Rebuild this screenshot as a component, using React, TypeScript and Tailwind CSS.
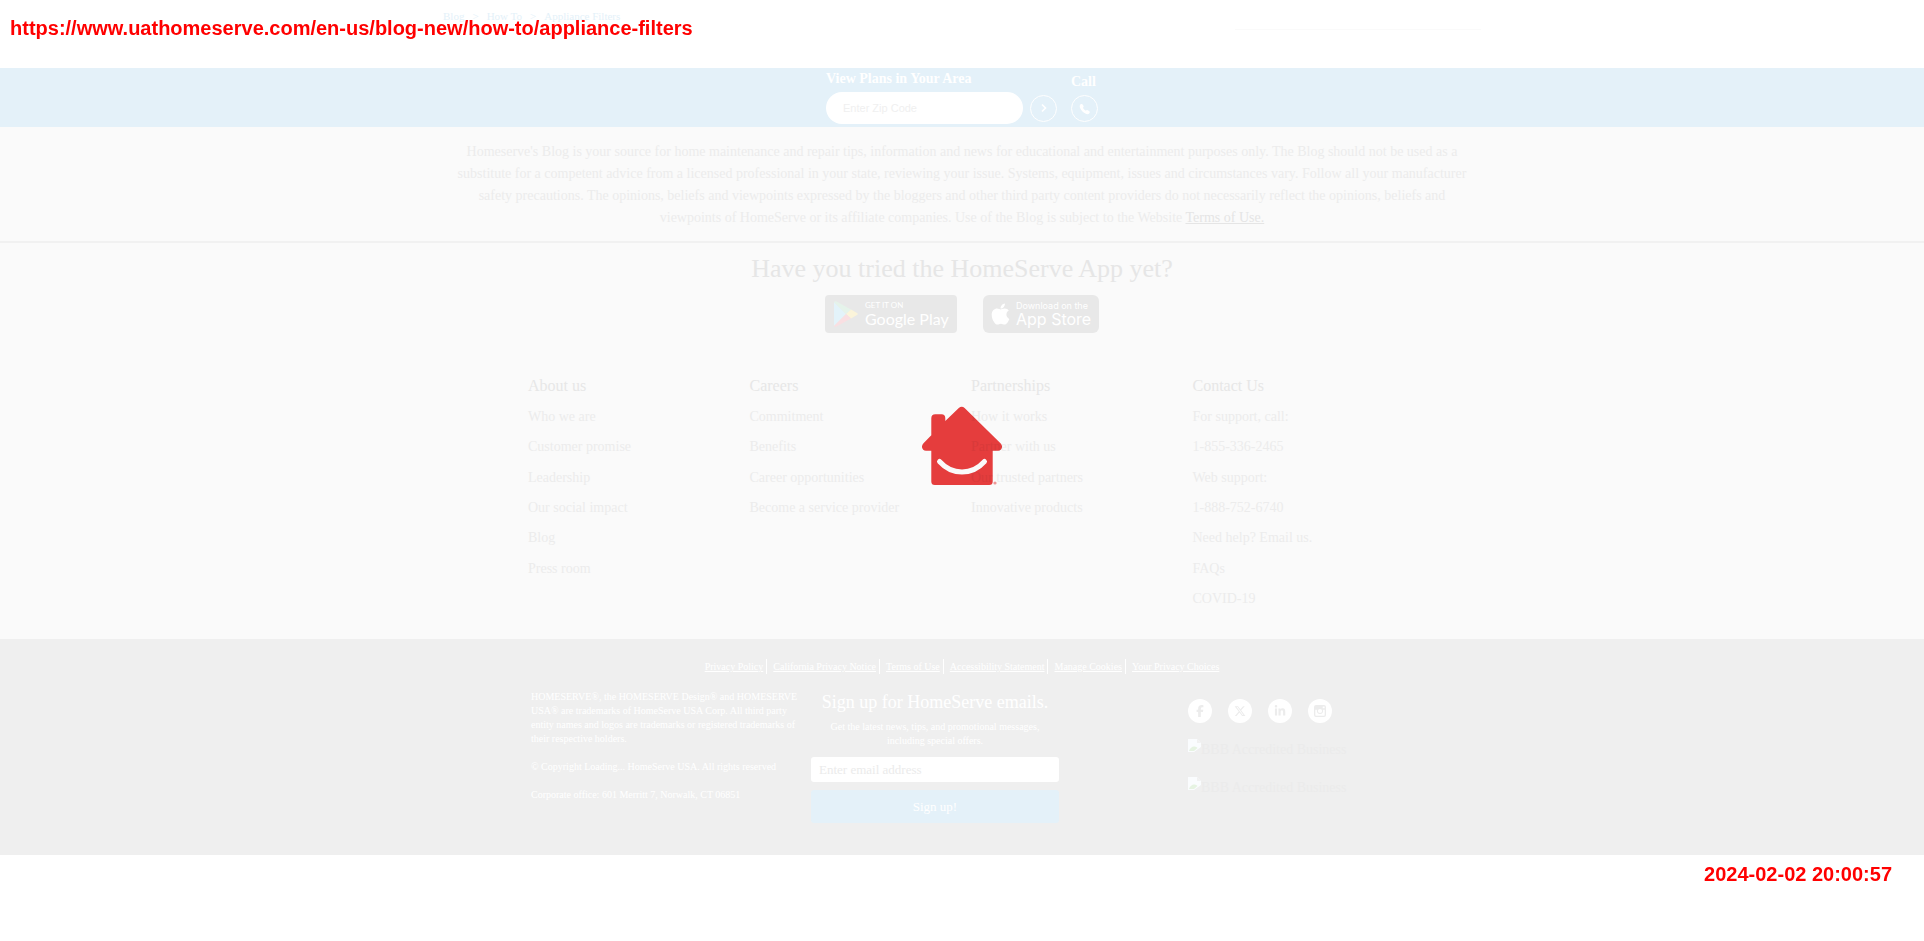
import React from "react";
import { FaApple, FaFacebookF, FaLinkedinIn, FaXTwitter } from "react-icons/fa6";

const columns = [
  {
    title: "About us",
    items: ["Who we are", "Customer promise", "Leadership", "Our social impact", "Blog", "Press room"],
  },
  {
    title: "Careers",
    items: ["Commitment", "Benefits", "Career opportunities", "Become a service provider"],
  },
  {
    title: "Partnerships",
    items: ["How it works", "Partner with us", "Our trusted partners", "Innovative products"],
  },
  {
    title: "Contact Us",
    items: [
      "For support, call:",
      "1-855-336-2465",
      "Web support:",
      "1-888-752-6740",
      "Need help? Email us.",
      "FAQs",
      "COVID-19",
    ],
  },
];

const legalLinks = [
  "Privacy Policy",
  "California Privacy Notice",
  "Terms of Use",
  "Accessibility Statement",
  "Manage Cookies",
  "Your Privacy Choices",
];

function CameraIcon({ className }: { className?: string }) {
  return (
    <svg viewBox="0 0 12 12" className={className} fill="currentColor">
      <path
        fillRule="evenodd"
        d="M2 0h8a2 2 0 0 1 2 2v8a2 2 0 0 1-2 2H2a2 2 0 0 1-2-2V2a2 2 0 0 1 2-2ZM1.300 4.700V10q0 .7.7.7h8q.7 0 .7-.7V4.700H9A3.200 3.200 0 1 1 3 4.700ZM8.700 1.400v1.800h1.900V1.400ZM6 3.900a2.100 2.100 0 1 0 0 4.200 2.100 2.100 0 0 0 0-4.200Z"
      />
    </svg>
  );
}

const socials = [
  { name: "Facebook", Icon: FaFacebookF },
  { name: "X", Icon: FaXTwitter },
  { name: "LinkedIn", Icon: FaLinkedinIn },
  { name: "Instagram", Icon: CameraIcon },
];

function Header() {
  return (
    <header className="h-[68px] bg-white">
      <div className="mx-auto flex max-w-[1038px] justify-between">
        <nav
          aria-label="Breadcrumb"
          className="flex gap-2 pt-[6px] text-[11px] leading-[20px] text-[#e4f1f9]"
        >
          <a href="#blog">Blog</a>
          <span>&gt;</span>
          <a href="#how-to">How To</a>
          <span>&gt;</span>
          <a href="#filters">Appliance Filters</a>
        </nav>
        <hr className="mt-[29px] w-[246px] border-[#fafafa]" />
      </div>
    </header>
  );
}

function PlansBar() {
  return (
    <section className="flex h-[59px] justify-center gap-[14px] bg-[#e4f1f9] text-white">
      <form onSubmit={(e) => e.preventDefault()}>
        <label htmlFor="zip" className="block pt-px text-[14px] font-bold leading-[20px]">
          View Plans in Your Area
        </label>
        <div className="mt-[3px] flex items-center gap-[7px]">
          <input
            id="zip"
            placeholder="Enter Zip Code"
            className="h-8 w-[197px] rounded-full bg-white px-[17px] font-['Liberation_Sans',sans-serif] text-[11px] outline-none placeholder:text-[#f0f0f0]"
          />
          <button
            type="submit"
            aria-label="Search plans"
            className="flex size-[27px] items-center justify-center rounded-full border border-white"
          >
            <svg viewBox="0 0 8 10" className="h-[10px] w-2" fill="none" stroke="currentColor" strokeWidth="1.6">
              <path d="M2 1.5 5.5 5 2 8.5" />
            </svg>
          </button>
        </div>
      </form>
      <div className="flex flex-col gap-[3px] pt-1">
        <span className="text-[14px] font-bold leading-[20px]">Call</span>
        <a
          href="#call"
          aria-label="Call"
          className="flex size-[27px] items-center justify-center rounded-full border border-white"
        >
          <svg viewBox="0 0 12 12" className="size-3" fill="currentColor">
            <path d="M1.6 1.2C2.4.6 3.5.9 4 1.9l.5 1.2c.3.7 0 1.2-.5 1.7.6 1.3 1.5 2.2 2.8 2.9.6-.6 1.2-.8 1.9-.4l1.4.8c.8.5.9 1.4.3 2.1-.9 1-2.1 1.2-3.5.6C4.3 9.7 2.2 7.6 1.1 5 .5 3.500.5 2.100 1.600 1.200Z" />
          </svg>
        </a>
      </div>
    </section>
  );
}

function Disclaimer() {
  return (
    <section className="border-b-2 border-[#f1f1f1] pb-3 pt-[14px]">
      <p className="mx-auto max-w-[1020px] text-center text-[14px] leading-[22px] text-[#ececec]">
        Homeserve's Blog is your source for home maintenance and repair tips, information and news for educational and
        entertainment purposes only. The Blog should not be used as a substitute for a competent advice from a licensed
        professional in your state, reviewing your issue. Systems, equipment, issues and circumstances vary. Follow all
        your manufacturer safety precautions. The opinions, beliefs and viewpoints expressed by the bloggers and other
        third party content providers do not necessarily reflect the opinions, beliefs and viewpoints of HomeServe or
        its affiliate companies. Use of the Blog is subject to the Website{" "}
        <a href="#terms" className="text-[#e5e5e5] underline">
          Terms of Use.
        </a>
      </p>
    </section>
  );
}

function AppPromo() {
  return (
    <section className="flex flex-col items-center pt-2">
      <h2 className="text-[26px] leading-[36px] text-[#e6e6e6]">Have you tried the HomeServe App yet?</h2>
      <div className="mt-2 flex gap-[26px] text-white">
        <a href="#google-play" className="flex h-[38px] w-[132px] items-center rounded bg-[#e8e8e8] pl-[9px]">
          <svg viewBox="0 0 24 26" className="h-[26px] w-6">
            <path d="M0 1v24l12-12Z" fill="#e3f3fa" />
            <path d="M0 1 12 13l5-4.500L2 .3Q.7-.2 0 1Z" fill="#e5f3ea" />
            <path d="M17 8.500 12 13l5 4.500 6-3.500q1.500-1 0-2Z" fill="#fbf4da" />
            <path d="M0 25 12 13l5 4.500L2 25.700Q.7 26.200 0 25Z" fill="#f9dfe2" />
          </svg>
          <span className="flex flex-col pl-[7px] font-['Lato',sans-serif]">
            <span className="text-[8px] leading-[10px]">GET IT ON</span>
            <span className="text-[16px] leading-[18px]">Google Play</span>
          </span>
        </a>
        <a href="#app-store" className="flex h-[38px] w-[116px] items-center rounded-md bg-[#e8e8e8] pl-[8px]">
          <FaApple className="h-[24px] w-[19px]" />
          <span className="flex flex-col pl-[6px] font-['Inter',sans-serif]">
            <span className="whitespace-nowrap text-[9px] leading-[10px]">Download on the</span>
            <span className="text-[16px] leading-[17px]">App Store</span>
          </span>
        </a>
      </div>
    </section>
  );
}

function SiteLinks() {
  return (
    <nav aria-label="Site" className="mx-auto mt-[41px] grid max-w-[886px] grid-cols-4 pb-[25px]">
      {columns.map((col) => (
        <div key={col.title} className="pl-[9px]">
          <h3 className="text-[16px] leading-[24px] text-[#e7e7e7]">{col.title}</h3>
          <ul className="mt-[3px] grid h-[213px] grid-rows-7 items-center text-[14px] leading-[21px] text-[#ececec]">
            {col.items.map((item) => (
              <li key={item}>
                <a href="#site">{item}</a>
              </li>
            ))}
          </ul>
        </div>
      ))}
    </nav>
  );
}

function BrokenImage({ label }: { label: string }) {
  return (
    <div className="flex h-[22px] items-start text-[14px] leading-[22px] text-[#ebebeb]">
      <svg viewBox="0 0 13 13" className="size-[13px] shrink-0">
        <path d="M0 0h9l4 4v4L6 13H0Z" fill="#fafcfe" />
        <path d="M9 0v4h4Z" fill="#f1f1f1" />
        <path d="M1 12c1-3 3-4.500 5-4.500 1.500 0 2.500.5 3.500 1.500L6 12Z" fill="#e6f3e2" />
      </svg>
      <span className="whitespace-nowrap">{label}</span>
    </div>
  );
}

function Footer() {
  return (
    <footer className="h-[216px] bg-[#efefef] pt-5 text-[10px] leading-[14px] text-white">
      <nav aria-label="Legal" className="flex justify-center gap-[6px] leading-[15px]">
        {legalLinks.map((link) => (
          <span key={link} className="border-r border-white pr-[3px] last:border-r-0 last:pr-0">
            <a href="#legal" className="underline">
              {link}
            </a>
          </span>
        ))}
      </nav>
      <div className="mx-auto mt-4 grid max-w-[862px] grid-cols-[270px_248px_1fr] gap-[10px]">
        <div className="flex flex-col gap-[14px]">
          <p>
            HOMESERVE®, the HOMESERVE Design® and HOMESERVE USA® are trademarks of HomeServe USA Corp. All third party
            entity names and logos are trademarks or registered trademarks of their respective holders.
          </p>
          <p>© Copyright Loading... HomeServe USA. All rights reserved</p>
          <p>Corporate office: 601 Merritt 7, Norwalk, CT 06851</p>
        </div>
        <form className="flex flex-col" onSubmit={(e) => e.preventDefault()}>
          <h3 className="text-center text-[18px] leading-[24px]">Sign up for HomeServe emails.</h3>
          <p className="mt-[6px] px-4 text-center">
            Get the latest news, tips, and promotional messages, including special offers.
          </p>
          <input
            type="email"
            aria-label="Email address"
            placeholder="Enter email address"
            className="mt-[9px] h-[25px] rounded-[3px] bg-white px-2 text-[13px] outline-none placeholder:text-[#ebebeb]"
          />
          <button type="submit" className="mt-2 h-[33px] rounded-[3px] bg-[#e4f1f9] text-[13px]">
            Sign up!
          </button>
        </form>
        <div className="pl-[119px] pt-[9px]">
          <div className="flex gap-4">
            {socials.map(({ name, Icon }) => (
              <a
                key={name}
                href="#social"
                aria-label={name}
                className="flex size-6 items-center justify-center rounded-full bg-white text-[#ececec]"
              >
                <Icon className="size-3" />
              </a>
            ))}
          </div>
          <div className="mt-4 flex flex-col gap-4">
            <BrokenImage label="BBB Accredited Business" />
            <BrokenImage label="BBB Accredited Business" />
          </div>
        </div>
      </div>
    </footer>
  );
}

function Loader() {
  return (
    <div className="pointer-events-none fixed inset-0 flex items-center justify-center pb-[50px] mix-blend-multiply">
      <svg viewBox="0 0 80 80" className="size-20" role="img" aria-label="Loading">
        <path
          d="M36.8 2Q39.7-.6 42.6 2L78.5 37.2C81.5 40.2 79.8 44.7 76 44.7H70.7V75.5Q70.7 79 67.2 79H12.8Q9.3 79 9.3 75.5V44.7H4C.2 44.7-1.5 40.2 1.5 37.2L9.3 29.3V12.3Q9.3 8.3 13.3 8.3H19.5Q23.3 8.3 23.3 12.3V14.9Z"
          fill="#ea3e3e"
        />
        <path d="M17.5 55.500C30 69.500 50 69.500 62.500 55.500" fill="none" stroke="#fff" strokeWidth="5" strokeLinecap="round" />
        <circle cx="73" cy="77" r="1.6" fill="#f19a9a" />
      </svg>
    </div>
  );
}

export default function App() {
  return (
    <div className="relative min-h-screen bg-white font-['Liberation_Serif',serif]">
      <Header />
      <PlansBar />
      <main className="bg-[#fafafa]">
        <Disclaimer />
        <AppPromo />
        <SiteLinks />
      </main>
      <Footer />
      <Loader />
      <div className="absolute left-[10px] top-[16px] font-['Liberation_Sans',sans-serif] text-[20px] font-bold leading-[24px] text-[#ff0000]">
        https://www.uathomeserve.com/en-us/blog-new/how-to/appliance-filters
      </div>
      <div className="absolute right-8 top-[862px] font-['Liberation_Sans',sans-serif] text-[20px] font-bold leading-[24px] text-[#ff0000]">
        2024-02-02 20:00:57
      </div>
    </div>
  );
}
